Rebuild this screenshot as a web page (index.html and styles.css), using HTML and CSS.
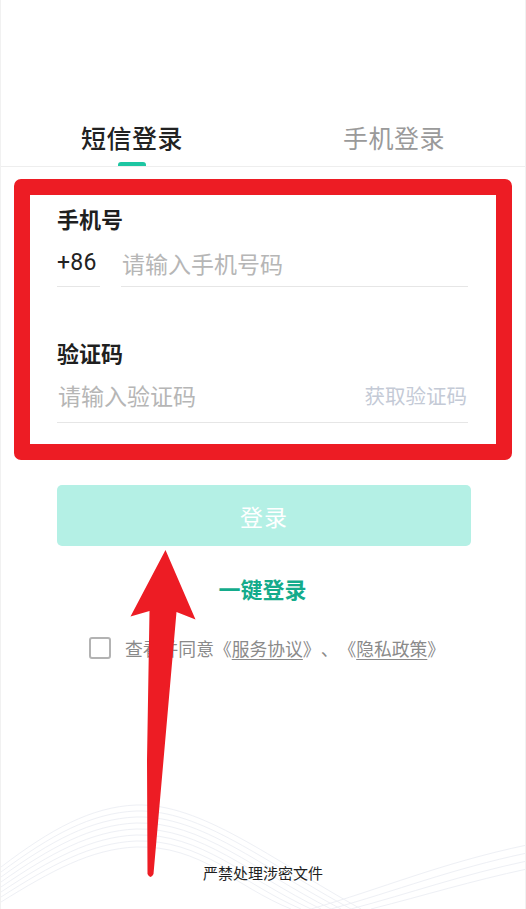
FILE: index.html
```html
<!DOCTYPE html>
<html lang="zh-CN">
<head>
<meta charset="utf-8">
<title>短信登录</title>
<link rel="stylesheet" href="styles.css">
</head>
<body>
<div class="page">
  <svg class="waves" viewBox="0 0 526 120" width="526" height="120" aria-hidden="true">
    <g fill="none" stroke="#eef0f5" stroke-width="1">
      <path d="M0 78 C50 40 90 18 135 16 C200 14 270 70 360 120"/>
      <path d="M0 83 C50 46 90 24 135 22 C200 20 265 74 350 120"/>
      <path d="M0 88 C50 52 90 30 135 28 C200 26 260 78 340 120"/>
      <path d="M0 93 C50 58 90 36 135 34 C200 32 255 82 330 120"/>
      <path d="M0 98 C50 64 90 42 135 40 C200 38 250 86 320 120"/>
      <path d="M0 103 C50 70 90 48 135 46 C200 44 245 90 310 120"/>
      <path d="M0 108 C50 76 90 54 135 52 C200 50 240 94 300 120"/>
      <path d="M0 113 C50 82 90 60 135 58 C200 56 235 98 290 120"/>
      <path d="M310 120 C380 100 440 74 526 56"/>
      <path d="M330 120 C395 102 450 80 526 64"/>
      <path d="M350 120 C410 104 460 86 526 72"/>
      <path d="M370 120 C425 106 470 92 526 80"/>
    </g>
  </svg>

  <nav class="tabs">
    <div class="tab tab-active">
      <span class="tab-label">短信登录</span>
      <span class="tab-indicator"></span>
    </div>
    <div class="tab">
      <span class="tab-label">手机登录</span>
      <span class="tab-indicator tab-indicator-hidden"></span>
    </div>
  </nav>

  <form class="form">
    <div class="field-label">手机号</div>
    <div class="field-row">
      <span class="prefix">+86</span>
      <input class="field-input" type="tel" placeholder="请输入手机号码">
    </div>

    <div class="field-label field-label-second">验证码</div>
    <div class="field-row">
      <input class="field-input field-input-code" type="text" placeholder="请输入验证码">
      <span class="get-code">获取验证码</span>
    </div>

    <button class="login-btn" type="button">登录</button>
    <div class="quick-login">一键登录</div>

    <label class="agree">
      <span class="checkbox"></span>
      <span class="agree-text">查看并同意《<span class="link">服务协议</span>》、《<span class="link">隐私政策</span>》</span>
    </label>
  </form>

  <footer class="footer">严禁处理涉密文件</footer>

  <div class="highlight-box"></div>
  <svg class="arrow" viewBox="0 0 526 909" width="526" height="909" aria-hidden="true">
    <path d="M165.5 550 L195.5 619.5 L176.5 612 L153.5 874 Q150.5 880 147.5 874 L147 760 L149.5 611 L130.5 616.5 Z" fill="#ed1c24"/>
  </svg>
</div>
</body>
</html>
```

FILE: styles.css
```css
* {
  box-sizing: border-box;
}

html, body {
  margin: 0;
  padding: 0;
  background: #ffffff;
}

body {
  font-family: Roboto, "Noto Sans CJK SC", sans-serif;
  color: #222222;
  text-spacing-trim: space-all;
}

.page {
  position: relative;
  width: 526px;
  height: 909px;
  overflow: hidden;
  display: flex;
  flex-direction: column;
  background: #ffffff;
  border-left: 1px solid #f1f1f1;
  border-right: 1px solid #f1f1f1;
}

.waves {
  position: absolute;
  left: 0;
  bottom: 0;
  pointer-events: none;
}

/* Tabs */
.tabs {
  display: flex;
  padding-top: 122px;
  border-bottom: 1px solid #eeeeee;
  position: relative;
}

.tab {
  flex: 1;
  display: flex;
  flex-direction: column;
  align-items: center;
}

.tab-label {
  font-family: "Noto Sans CJK SC", sans-serif;
  font-size: 25px;
  line-height: 30px;
  color: #9a9a9a;
  font-weight: 400;
  letter-spacing: 0.5px;
}

.tab-active .tab-label {
  color: #222222;
  font-weight: 500;
}

.tab-indicator {
  width: 28px;
  height: 4px;
  margin-top: 10px;
  background: #1dc6a2;
  border-radius: 3px 3px 0 0;
}

.tab-indicator-hidden {
  visibility: hidden;
}

/* Form */
.form {
  display: flex;
  flex-direction: column;
  padding: 36px 57px 0 56px;
  position: relative;
}

.field-label {
  font-family: "Noto Sans CJK SC", sans-serif;
  font-size: 22px;
  line-height: 30px;
  font-weight: 700;
  color: #1f1f1f;
}

.field-label-second {
  margin-top: 50px;
}

.field-row {
  display: flex;
  align-items: stretch;
  gap: 21px;
}

.prefix,
.field-input,
.get-code {
  padding-top: 12px;
  padding-bottom: 5px;
  border-bottom: 1px solid #e6e6e6;
}

.prefix {
  width: 43px;
  flex: none;
  font-family: Roboto, "Liberation Sans", sans-serif;
  font-size: 23px;
  line-height: 36px;
  color: #222222;
  letter-spacing: 0.3px;
}

.field-input {
  flex: 1;
  min-width: 0;
  height: 54px;
  border-top: none;
  border-left: none;
  border-right: none;
  outline: none;
  margin: 0;
  padding-left: 1px;
  padding-right: 0;
  font-family: "Noto Sans CJK SC", sans-serif;
  font-size: 23px;
  line-height: 36px;
  color: #222222;
  background: transparent;
}

.field-input::placeholder {
  color: #b6b6b6;
}

.field-row .field-input-code {
  padding-top: 10px;
  padding-bottom: 9px;
  height: 56px;
}

.get-code {
  flex: none;
  margin-left: -21px;
  padding-top: 10px;
  padding-bottom: 9px;
  padding-right: 1px;
  font-family: "Noto Sans CJK SC", sans-serif;
  font-size: 20.5px;
  line-height: 36px;
  color: #c4cad6;
}

.login-btn {
  margin-top: 62px;
  height: 61px;
  width: 414px;
  border: none;
  border-radius: 5px;
  background: #b4f0e5;
  color: #ffffff;
  font-family: "Noto Sans CJK SC", sans-serif;
  font-size: 23px;
  letter-spacing: 1px;
}

.quick-login {
  margin-top: 27px;
  text-align: center;
  font-family: "Noto Sans CJK SC", sans-serif;
  font-size: 22px;
  line-height: 30px;
  font-weight: 700;
  color: #14ab8b;
}

.agree {
  margin-top: 30px;
  display: flex;
  align-items: center;
  padding-left: 32px;
  gap: 14px;
  height: 30px;
}

.checkbox {
  width: 22px;
  height: 22px;
  border: 2px solid #b3b3b3;
  border-radius: 3px;
  flex: none;
}

.agree-text {
  font-family: "Noto Sans CJK SC", sans-serif;
  font-size: 17.8px;
  line-height: 30px;
  color: #8a8a8a;
  white-space: nowrap;
  text-spacing-trim: space-all;
}

.link {
  text-decoration: underline;
  text-underline-offset: 3px;
  color: #8a8a8a;
}

.footer {
  margin-top: auto;
  padding-bottom: 26px;
  text-align: center;
  font-family: "Noto Sans CJK SC", sans-serif;
  font-size: 15px;
  line-height: 20px;
  color: #1f1f1f;
  position: relative;
}

/* Annotation overlays */
.highlight-box {
  position: absolute;
  left: 13px;
  top: 179px;
  width: 498px;
  height: 281px;
  border: 16px solid #ed1c24;
  border-radius: 7px;
  pointer-events: none;
}

.arrow {
  position: absolute;
  left: -1px;
  top: 0;
  pointer-events: none;
}
```
